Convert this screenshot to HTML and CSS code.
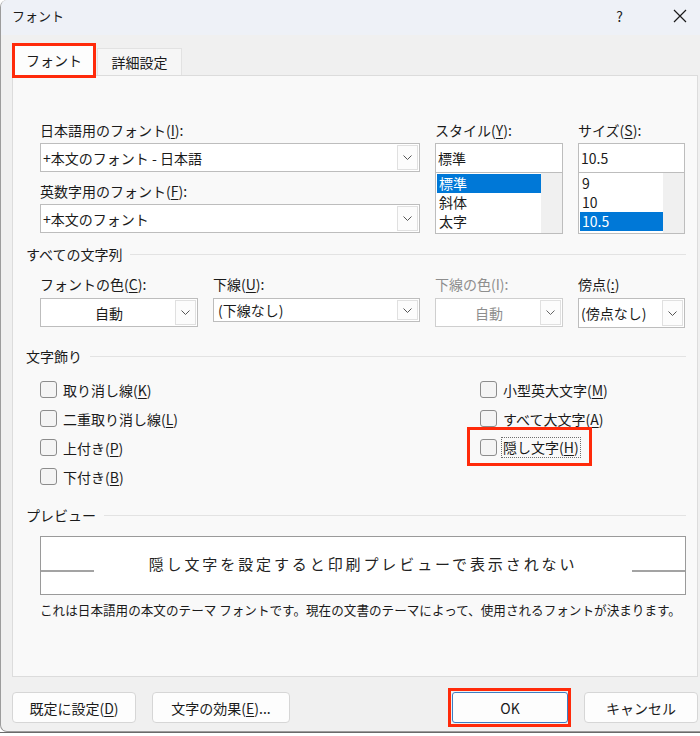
FILE: index.html
```html
<!DOCTYPE html>
<html lang="ja">
<head>
<meta charset="utf-8">
<title>フォント</title>
<link rel="stylesheet" href="styles.css">
</head>
<body>
<div class="window">
  <header class="titlebar">
    <span class="title">フォント</span>
    <div class="title-controls">
      <span class="help">?</span>
      <svg class="close" width="14" height="14" viewBox="0 0 14 14"><path d="M1 1L13 13M13 1L1 13" stroke="#1a1a1a" stroke-width="1.2" fill="none"/></svg>
    </div>
  </header>
  <div class="dialog">
    <div class="tabs">
      <div class="tab active">フォント</div>
      <div class="tab">詳細設定</div>
    </div>
    <div class="panel">
      <div class="font-top">
        <div class="col">
          <div class="lbl">日本語用のフォント(<u>I</u>):</div>
          <div class="combo big"><span class="val">+本文のフォント - 日本語</span><span class="dd"><svg width="9" height="5" viewBox="0 0 9 5"><path d="M0.5 0.5L4.5 4.5L8.5 0.5" stroke="#555" fill="none"/></svg></span></div>
          <div class="lbl lbl2">英数字用のフォント(<u>F</u>):</div>
          <div class="combo big"><span class="val">+本文のフォント</span><span class="dd"><svg width="9" height="5" viewBox="0 0 9 5"><path d="M0.5 0.5L4.5 4.5L8.5 0.5" stroke="#555" fill="none"/></svg></span></div>
        </div>
        <div class="col">
          <div class="lbl">スタイル(<u>Y</u>):</div>
          <div class="textbox">標準</div>
          <div class="listbox">
            <div class="items">
              <div class="item sel">標準</div>
              <div class="item">斜体</div>
              <div class="item">太字</div>
            </div>
            <div class="scroll"></div>
          </div>
        </div>
        <div class="col">
          <div class="lbl">サイズ(<u>S</u>):</div>
          <div class="textbox">10.5</div>
          <div class="listbox">
            <div class="items">
              <div class="item">9</div>
              <div class="item">10</div>
              <div class="item sel">10.5</div>
            </div>
            <div class="scroll"></div>
          </div>
        </div>
      </div>

      <div class="group-head"><span>すべての文字列</span><i></i></div>
      <div class="all-row">
        <div class="col">
          <div class="lbl">フォントの色(<u>C</u>):</div>
          <div class="combo"><span class="val center">自動</span><span class="dd"><svg width="9" height="5" viewBox="0 0 9 5"><path d="M0.5 0.5L4.5 4.5L8.5 0.5" stroke="#555" fill="none"/></svg></span></div>
        </div>
        <div class="col">
          <div class="lbl">下線(<u>U</u>):</div>
          <div class="combo short"><span class="val pad">(下線なし)</span><span class="dd"><svg width="9" height="5" viewBox="0 0 9 5"><path d="M0.5 0.5L4.5 4.5L8.5 0.5" stroke="#555" fill="none"/></svg></span></div>
        </div>
        <div class="col disabled">
          <div class="lbl">下線の色(I):</div>
          <div class="combo"><span class="val center">自動</span><span class="dd"><svg width="9" height="5" viewBox="0 0 9 5"><path d="M0.5 0.5L4.5 4.5L8.5 0.5" stroke="#666" fill="none"/></svg></span></div>
        </div>
        <div class="col">
          <div class="lbl">傍点(<u>:</u>)</div>
          <div class="combo tall"><span class="val">(傍点なし)</span><span class="dd"><svg width="9" height="5" viewBox="0 0 9 5"><path d="M0.5 0.5L4.5 4.5L8.5 0.5" stroke="#555" fill="none"/></svg></span></div>
        </div>
      </div>

      <div class="group-head deco"><span>文字飾り</span><i></i></div>
      <div class="checks">
        <div class="check-col">
          <div class="cb"><span class="box"></span><span class="cl">取り消し線(<u>K</u>)</span></div>
          <div class="cb"><span class="box"></span><span class="cl">二重取り消し線(<u>L</u>)</span></div>
          <div class="cb"><span class="box"></span><span class="cl">上付き(<u>P</u>)</span></div>
          <div class="cb"><span class="box"></span><span class="cl">下付き(<u>B</u>)</span></div>
        </div>
        <div class="check-col">
          <div class="cb"><span class="box"></span><span class="cl">小型英大文字(<u>M</u>)</span></div>
          <div class="cb"><span class="box"></span><span class="cl">すべて大文字(<u>A</u>)</span></div>
          <div class="cb marked"><span class="box"></span><span class="cl focus">隠し文字(<u>H</u>)</span></div>
        </div>
      </div>

      <div class="group-head prev"><span>プレビュー</span><i></i></div>
      <div class="preview">
        <span class="pline"></span>
        <span class="ptext">隠し文字を設定すると印刷プレビューで表示されない</span>
        <span class="pline"></span>
      </div>
      <div class="caption">これは日本語用の本文のテーマ フォントです。現在の文書のテーマによって、使用されるフォントが決まります。</div>
    </div>

    <div class="buttons">
      <button class="btn b1">既定に設定(<u>D</u>)</button>
      <button class="btn b2">文字の効果(<u>E</u>)...</button>
      <button class="btn ok">OK</button>
      <button class="btn cancel">キャンセル</button>
    </div>
  </div>
</div>
<div class="below"></div>
</body>
</html>
```
FILE: styles.css
```css
* { box-sizing: border-box; }
html, body { margin: 0; padding: 0; }
body {
  width: 700px;
  height: 736px;
  overflow: hidden;
  background: #ffffff;
  font-family: "Noto Sans CJK JP", "Noto Sans", sans-serif;
  color: #1b1b1b;
  font-size: 14px;
}
u { text-decoration: underline; text-underline-offset: 2px; }

.window {
  height: 732px;
  background: #f0f0f0;
  border-left: 1px solid #9c9c9c;
  border-bottom: 1px solid #9c9c9c;
  border-radius: 7px 0 0 7px;
  overflow: hidden;
  display: flex;
  flex-direction: column;
}

.titlebar {
  height: 35px;
  flex: none;
  background: #eef1f7;
  display: flex;
  align-items: center;
  justify-content: space-between;
  padding: 0 13px 0 11px;
}
.title { font-size: 13px; line-height: 16px; margin-top: -3px; }
.title-controls { display: flex; align-items: center; gap: 50px; margin-top: -3px; }
.help { font-size: 14px; line-height: 16px; color: #222; }

.dialog {
  flex: 1;
  display: flex;
  flex-direction: column;
  padding: 0 2px 0 11px;
}

.tabs {
  height: 40px;
  flex: none;
  display: flex;
  align-items: flex-end;
}
.tab {
  display: flex;
  align-items: center;
  justify-content: center;
  font-size: 14px;
}
.tab.active {
  position: relative;
  z-index: 2;
  width: 84px;
  height: 35px;
  margin-bottom: -3px;
  border: 3px solid #ff2a0a;
  background: #fdfdfd;
  padding-bottom: 2px;
}
.tab:not(.active) {
  width: 85px;
  height: 27px;
  margin-left: 1px;
  background: #f6f6f6;
  border: 1px solid #e2e2e2;
  border-bottom: none;
}

.panel {
  height: 602px;
  flex: none;
  background: #f9f9f9;
  border: 1px solid #dcdcdc;
  padding: 44px 11px 0 13px;
}

.lbl { line-height: 20px; height: 20px; white-space: nowrap; }

.font-top {
  display: grid;
  grid-template-columns: 380px 128px 107px;
  column-gap: 15px;
  margin-left: 14px;
}
.col { display: flex; flex-direction: column; }
.lbl2 { margin-top: 9px; }

.combo {
  display: flex;
  align-items: stretch;
  background: #fff;
  border: 1px solid #bdbdbd;
  padding: 1px 1px 1px 0;
  height: 29px;
  margin-top: 4px;
}
.combo.big { margin-top: 3px; }
.combo.short { height: 24px; }
.combo.tall { height: 30px; }
.combo .val {
  flex: 1;
  display: flex;
  align-items: center;
  padding-left: 2px;
  white-space: nowrap;
}
.combo .val.center { justify-content: center; }
.combo .val.pad { padding-left: 4px; }
.combo .dd {
  width: 21px;
  flex: none;
  border: 1px solid #e0e0e0;
  background: #fcfcfc;
  display: flex;
  align-items: center;
  justify-content: center;
}

.textbox {
  margin-top: 3px;
  height: 30px;
  border: 1px solid #bdbdbd;
  background: #fff;
  display: flex;
  align-items: center;
  padding-left: 2px;
}
.listbox {
  margin-top: -1px;
  height: 62px;
  border: 1px solid #bdbdbd;
  background: #fff;
  display: flex;
  padding: 1px 0 0 1px;
}
.items { flex: 1; }
.item { height: 19px; line-height: 19px; padding-left: 2px; }
.item.sel { background: #0078d7; color: #fff; }
.scroll { width: 21px; flex: none; background: #f0f0f0; margin-top: -1px; }

.group-head {
  display: flex;
  align-items: center;
  height: 20px;
  line-height: 20px;
  margin-top: 10px;
}
.group-head i { flex: 1; border-top: 1px solid #e3e3e3; margin-left: 8px; }
.group-head.deco { margin-top: 18px; }
.group-head.prev { margin-top: 14px; }

.all-row {
  display: grid;
  grid-template-columns: 158px 207px 128px 107px;
  column-gap: 15px;
  margin-left: 14px;
  margin-top: 10px;
  align-items: start;
}
.disabled { color: #8e8e8e; }
.disabled .combo { border-color: #cfcfcf; }

.checks {
  display: grid;
  grid-template-columns: 440px 1fr;
  margin-left: 14px;
  margin-top: 9px;
}
.check-col { display: flex; flex-direction: column; }
.cb {
  height: 29px;
  display: flex;
  align-items: center;
  align-self: flex-start;
  white-space: nowrap;
}
.box {
  width: 17px;
  height: 17px;
  border: 1px solid #8c8c8c;
  border-radius: 3px;
  background: #f4f4f4;
  flex: none;
}
.cl { margin-left: 6px; line-height: 20px; }
.cl.focus {
  margin-left: 4px;
  border: 1px dotted #6e6e6e;
  padding: 0 1px;
  line-height: 19px;
}
.cb.marked { position: relative; }
.cb.marked::after {
  content: "";
  position: absolute;
  left: -13px;
  right: -11px;
  top: -6px;
  bottom: -4px;
  border: 3px solid #ff2a0a;
}

.preview {
  margin: 11px 0 0 14px;
  height: 59px;
  border: 1px solid #9a9a9a;
  background: #fff;
  display: flex;
  align-items: center;
}
.pline {
  width: 53px;
  height: 2px;
  background: #a3a3a3;
  margin-top: 10px;
  flex: none;
}
.ptext {
  flex: 1;
  text-align: center;
  font-size: 15px;
  letter-spacing: 2.9px;
  color: #222;
  margin-top: -4px;
  white-space: nowrap;
}
.caption {
  margin: 6px 0 0 14px;
  font-size: 12.6px;
  line-height: 18px;
  white-space: nowrap;
}

.buttons {
  display: flex;
  margin-top: 15px;
  height: 31px;
}
.btn {
  font-family: inherit;
  font-size: 14px;
  color: #1b1b1b;
  background: #fdfdfd;
  border: 1px solid #d6d6d6;
  border-radius: 4px;
  height: 31px;
  padding: 0;
}
.b1 { width: 124px; }
.b2 { width: 138px; margin-left: 16px; }
.ok {
  position: relative;
  width: 116px;
  margin-left: auto;
  border-color: #3c7dc4;
  border-radius: 3px;
}
.ok::after {
  content: "";
  position: absolute;
  left: -5px;
  right: -4px;
  top: -5px;
  bottom: -5px;
  border: 3px solid #ff2a0a;
}
.cancel { width: 114px; margin-left: 16px; }

.below {
  height: 4px;
  border-top: 1px solid #6a6a6a;
}
```
